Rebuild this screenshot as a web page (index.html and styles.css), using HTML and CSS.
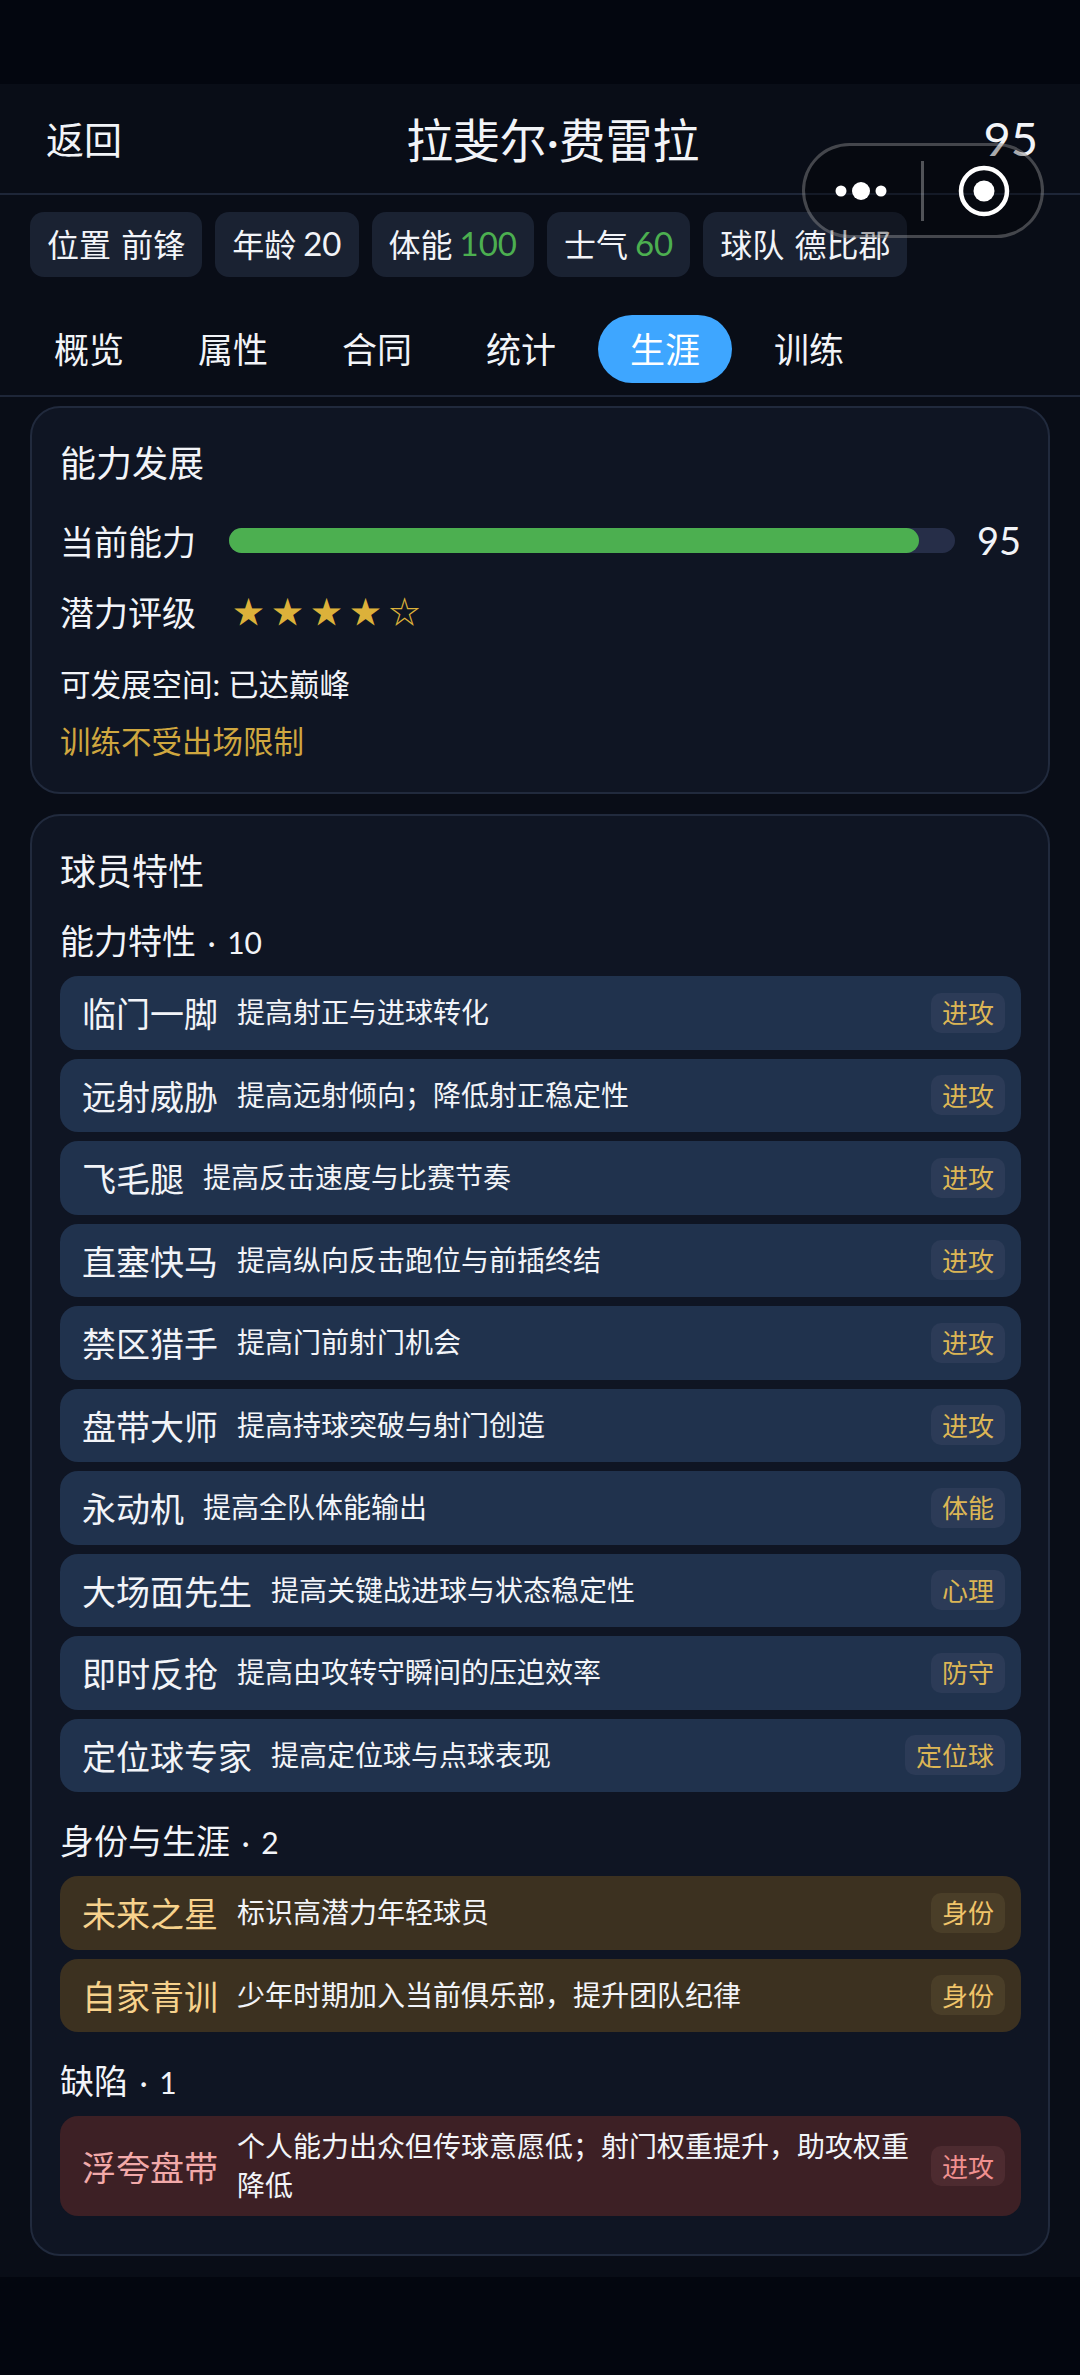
FILE: index.html
```html
<!DOCTYPE html>
<html lang="zh-CN">
<head>
  <meta charset="UTF-8" />
  <title>拉斐尔·费雷拉</title>
  <meta name="viewport" content="width=device-width, initial-scale=1.0" />
  <link rel="stylesheet" href="styles.css">
</head>
<body>
  <div class="status-space"></div>

  <div class="page">
    <!-- Header -->
    <header class="top-bar">
      <span class="back">返回</span>
      <span class="player-name">拉斐尔·费雷拉</span>
      <span class="overall">95</span>
    </header>

    <div class="chips">
      <div class="chip">位置 前锋</div>
      <div class="chip">年龄 <span class="num">20</span></div>
      <div class="chip">体能 <span class="num good">100</span></div>
      <div class="chip">士气 <span class="num good">60</span></div>
      <div class="chip">球队 德比郡</div>
    </div>

    <nav class="tabs">
      <div class="tab">概览</div>
      <div class="tab">属性</div>
      <div class="tab">合同</div>
      <div class="tab">统计</div>
      <div class="tab active">生涯</div>
      <div class="tab">训练</div>
    </nav>

    <main class="content">
      <!-- Ability card -->
      <section class="card ability-card">
        <h2 class="card-title">能力发展</h2>
        <div class="ability-row">
          <span class="ability-label">当前能力</span>
          <div class="bar"><div class="bar-fill"></div></div>
          <span class="ability-value">95</span>
        </div>
        <div class="ability-row potential-row">
          <span class="ability-label">潜力评级</span>
          <span class="stars">★★★★☆</span>
        </div>
        <p class="room">可发展空间: 已达巅峰</p>
        <p class="train-note">训练不受出场限制</p>
      </section>

      <!-- Traits card -->
      <section class="card traits-card">
        <h2 class="card-title">球员特性</h2>

        <h3 class="group-title">能力特性 <span class="count">· 10</span></h3>
        <div class="trait-list">
          <div class="trait"><span class="trait-name">临门一脚</span><span class="trait-desc">提高射正与进球转化</span><span class="trait-tag">进攻</span></div>
          <div class="trait"><span class="trait-name">远射威胁</span><span class="trait-desc">提高远射倾向；降低射正稳定性</span><span class="trait-tag">进攻</span></div>
          <div class="trait"><span class="trait-name">飞毛腿</span><span class="trait-desc">提高反击速度与比赛节奏</span><span class="trait-tag">进攻</span></div>
          <div class="trait"><span class="trait-name">直塞快马</span><span class="trait-desc">提高纵向反击跑位与前插终结</span><span class="trait-tag">进攻</span></div>
          <div class="trait"><span class="trait-name">禁区猎手</span><span class="trait-desc">提高门前射门机会</span><span class="trait-tag">进攻</span></div>
          <div class="trait"><span class="trait-name">盘带大师</span><span class="trait-desc">提高持球突破与射门创造</span><span class="trait-tag">进攻</span></div>
          <div class="trait"><span class="trait-name">永动机</span><span class="trait-desc">提高全队体能输出</span><span class="trait-tag">体能</span></div>
          <div class="trait"><span class="trait-name">大场面先生</span><span class="trait-desc">提高关键战进球与状态稳定性</span><span class="trait-tag">心理</span></div>
          <div class="trait"><span class="trait-name">即时反抢</span><span class="trait-desc">提高由攻转守瞬间的压迫效率</span><span class="trait-tag">防守</span></div>
          <div class="trait"><span class="trait-name">定位球专家</span><span class="trait-desc">提高定位球与点球表现</span><span class="trait-tag">定位球</span></div>
        </div>

        <h3 class="group-title">身份与生涯 <span class="count">· 2</span></h3>
        <div class="trait-list">
          <div class="trait gold"><span class="trait-name">未来之星</span><span class="trait-desc">标识高潜力年轻球员</span><span class="trait-tag">身份</span></div>
          <div class="trait gold"><span class="trait-name">自家青训</span><span class="trait-desc">少年时期加入当前俱乐部，提升团队纪律</span><span class="trait-tag">身份</span></div>
        </div>

        <h3 class="group-title">缺陷 <span class="count">· 1</span></h3>
        <div class="trait-list">
          <div class="trait red"><span class="trait-name">浮夸盘带</span><span class="trait-desc">个人能力出众但传球意愿低；射门权重提升，助攻权重降低</span><span class="trait-tag">进攻</span></div>
        </div>
      </section>
    </main>
  </div>

  <!-- Mini program capsule, floats over the header -->
  <div class="capsule">
    <svg class="capsule-dots" width="60" height="20" viewBox="0 0 60 20">
      <circle cx="10" cy="10" r="5.5" fill="#fff" />
      <circle cx="30" cy="10" r="9" fill="#fff" />
      <circle cx="50" cy="10" r="5.5" fill="#fff" />
    </svg>
    <div class="capsule-line"></div>
    <svg class="capsule-target" width="52" height="52" viewBox="0 0 52 52">
      <circle cx="26" cy="26" r="23" fill="none" stroke="#fff" stroke-width="4.5" />
      <circle cx="26" cy="26" r="10.5" fill="#fff" />
    </svg>
  </div>
</body>
</html>
```

FILE: styles.css
```css
/* ------------------------------
   RESET & BASE
------------------------------- */
* {
  margin: 0;
  padding: 0;
  box-sizing: border-box;
}
body {
  width: 1080px;
  height: 2375px;
  overflow: hidden;
  position: relative;
  background: #03060f;
  color: #f2f4f8;
  font-family: "Lato", "Noto Sans CJK SC", sans-serif;
}
.status-space {
  height: 84px;
}
.page {
  background: #090d17;
}

/* ------------------------------
   HEADER
------------------------------- */
.top-bar {
  height: 111px;
  padding: 0 42px 2px 46px;
  display: flex;
  align-items: center;
  justify-content: space-between;
  border-bottom: 2px solid #1e2638;
}
.back {
  font-size: 38px;
}
.player-name {
  font-size: 46.8px;
}
.overall {
  font-size: 47px;
}
.chips {
  padding: 17px 30px 0;
  display: flex;
  gap: 13px;
}
.chip {
  height: 65px;
  padding: 0 17px 3px;
  display: flex;
  align-items: center;
  gap: 7px;
  border-radius: 14px;
  background: #1a2232;
  font-size: 32px;
  word-spacing: 2px;
}
.num {
  font-size: 33px;
}
.good {
  color: #4caf50;
}
.tabs {
  margin-top: 38px;
  padding: 0 22px 12px;
  display: flex;
  gap: 10px;
  border-bottom: 2px solid #1e2638;
}
.tab {
  height: 68px;
  padding: 0 32px 3px;
  display: flex;
  align-items: center;
  border-radius: 34px;
  font-size: 35px;
}
.tab.active {
  background: #3ea6ff;
  color: #fff;
}

/* ------------------------------
   CARDS
------------------------------- */
.content {
  padding: 9px 30px 21px;
  display: flex;
  flex-direction: column;
  gap: 20px;
}
.card {
  background: #0f1523;
  border: 2px solid #212a3d;
  border-radius: 30px;
  padding: 0 27px 0 28px;
}
.card-title {
  font-size: 36px;
  font-weight: 400;
  line-height: 50px;
}
.ability-card {
  height: 388px;
  padding-top: 30px;
}
.ability-row {
  margin-top: 27px;
  height: 50px;
  display: flex;
  align-items: center;
}
.potential-row {
  margin-top: 21px;
}
.ability-label {
  width: 169px;
  font-size: 34px;
}
.bar {
  flex: 1;
  height: 25px;
  border-radius: 13px;
  background: #262e48;
}
.bar-fill {
  width: 95%;
  height: 100%;
  border-radius: 13px;
  background: #4caf50;
}
.ability-value {
  margin-left: 22px;
  font-size: 38px;
}
.stars {
  margin-left: 4px;
  color: #dcb13a;
  font-size: 31px;
  letter-spacing: 8px;
  line-height: 50px;
}
.room {
  margin-top: 27px;
  font-size: 30.5px;
  line-height: 42px;
}
.train-note {
  margin-top: 15px;
  font-size: 30.5px;
  line-height: 42px;
  color: #cfa73f;
}

/* ------------------------------
   TRAITS
------------------------------- */
.traits-card {
  padding-top: 30px;
  padding-bottom: 38px;
}
.group-title {
  margin-top: 22px;
  font-size: 34px;
  font-weight: 400;
  line-height: 46px;
  margin-bottom: 11px;
}
.trait-list + .group-title {
  margin-top: 26px;
}
.count {
  margin-left: 3px;
  font-size: 30px;
  word-spacing: 4px;
}
.trait-list {
  display: flex;
  flex-direction: column;
  gap: 9px;
}
.trait {
  min-height: 73.5px;
  padding: 11px 16px 11px 22px;
  display: flex;
  align-items: center;
  gap: 19px;
  border-radius: 18px;
  background: #20324d;
}
.trait-name {
  flex: none;
  font-size: 34px;
}
.trait-desc {
  flex: 1;
  font-size: 28px;
  line-height: 39px;
}
.trait-tag {
  flex: none;
  height: 40px;
  padding: 0 11px 2px;
  display: flex;
  align-items: center;
  border-radius: 10px;
  background: #2c3b57;
  color: #dcb655;
  font-size: 26px;
}
.trait.gold {
  background: #3c3120;
}
.trait.gold .trait-name {
  color: #f7d28c;
}
.trait.gold .trait-tag {
  background: #4a3e28;
  color: #f0c46a;
}
.trait.red {
  background: #3d2025;
}
.trait.red .trait-name {
  color: #f2a9a9;
}
.trait.red .trait-tag {
  background: #4d2b30;
  color: #f0908f;
}

/* ------------------------------
   CAPSULE OVERLAY
------------------------------- */
.capsule {
  position: absolute;
  left: 802px;
  top: 143px;
  width: 242px;
  height: 95px;
  padding-left: 26px;
  display: flex;
  align-items: center;
  border: 3px solid rgba(255, 255, 255, 0.25);
  border-radius: 48px;
  background: rgba(0, 0, 0, 0.3);
}
.capsule-line {
  width: 3px;
  height: 60px;
  margin-left: 30px;
  background: rgba(255, 255, 255, 0.3);
}
.capsule-target {
  margin-left: 34px;
}
```
